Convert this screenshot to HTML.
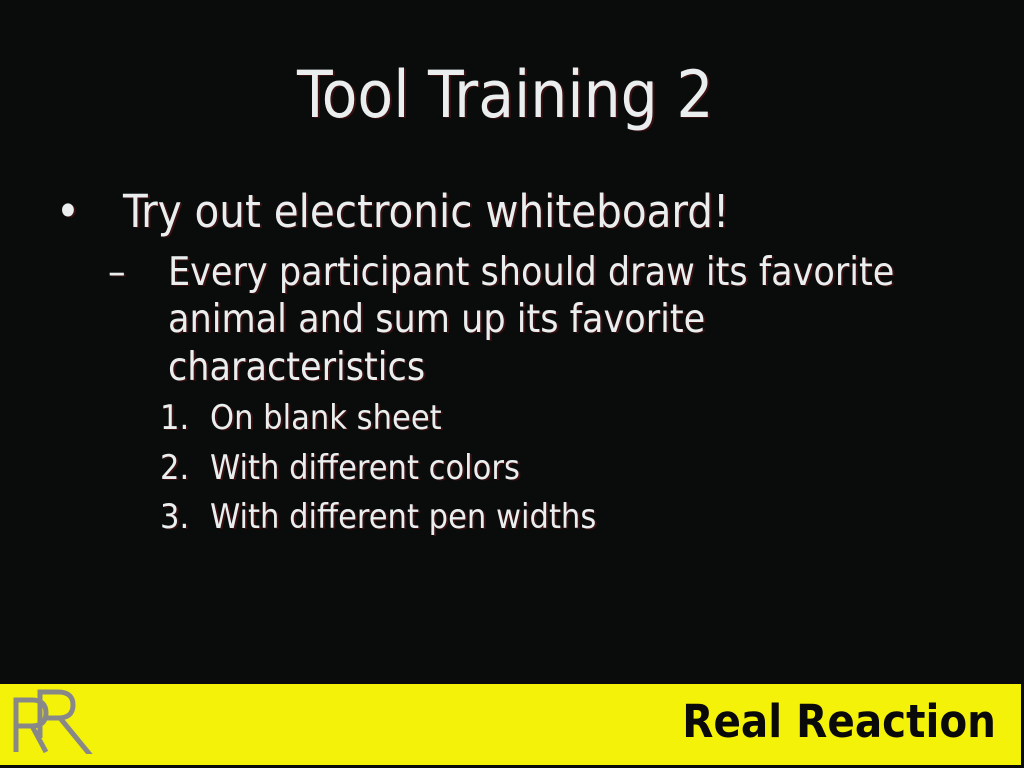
<!DOCTYPE html>
<html><head><meta charset="utf-8"><style>
html,body{margin:0;padding:0;}
body{width:1024px;height:768px;background:#0a0c0c;position:relative;overflow:hidden;font-family:"DejaVu Sans Condensed","DejaVu Sans",sans-serif;color:#eaeeee;}
.t{position:absolute;white-space:nowrap;line-height:1;text-shadow:2px 1px 0 #3a1010;}
.bar{position:absolute;left:0;top:684px;width:1021px;height:81px;background:#f5f20a;}
</style></head><body>
<div class="t" style="left:297px;top:63px;font-size:65px;">Tool Training 2</div>
<div class="t" style="left:56px;top:189px;font-size:45px;">•</div>
<div class="t" style="left:123px;top:189px;font-size:45px;">Try out electronic whiteboard!</div>
<div class="t" style="left:108px;top:253px;font-size:39px;">–</div>
<div class="t" style="left:168px;top:253px;font-size:39px;">Every participant should draw its favorite</div>
<div class="t" style="left:168px;top:300px;font-size:39px;">animal and sum up its favorite</div>
<div class="t" style="left:168px;top:348px;font-size:39px;">characteristics</div>
<div class="t" style="left:160px;top:401px;font-size:34px;">1.</div>
<div class="t" style="left:210px;top:401px;font-size:34px;">On blank sheet</div>
<div class="t" style="left:160px;top:451px;font-size:34px;">2.</div>
<div class="t" style="left:210px;top:451px;font-size:34px;">With different colors</div>
<div class="t" style="left:160px;top:500px;font-size:34px;">3.</div>
<div class="t" style="left:210px;top:500px;font-size:34px;">With different pen widths</div>
<div class="bar"></div>
<svg style="position:absolute;left:10px;top:688px" width="90" height="66" viewBox="0 0 90 66">
<g fill="none" stroke="#888" stroke-width="5">
<path d="M6 64V12h16q14 0 14 13t-14 13H6M22 38l14 26"/>
<path d="M30 50V4h18q15 0 15 13t-15 13H36M50 30l36 44"/>
</g></svg>
<div style="position:absolute;left:600px;top:697px;width:396px;text-align:right;font:bold 45px 'DejaVu Sans Condensed','DejaVu Sans',sans-serif;color:#0a0a0a;line-height:50px;white-space:nowrap;">Real Reaction</div>
</body></html>
